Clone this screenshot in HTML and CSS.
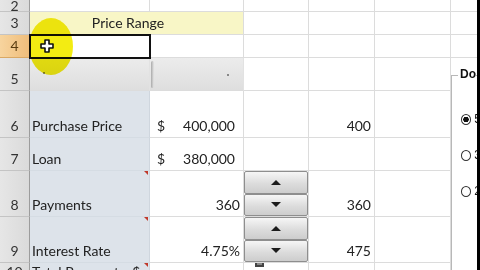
FILE: index.html
```html
<!DOCTYPE html>
<html lang="en">
<head>
  <meta charset="UTF-8" />
  <meta name="viewport" content="width=device-width, initial-scale=1.0"/>
  <title>Loan Calculator</title>
  <link rel="stylesheet" href="styles.css">
</head>
<body>

  <div class="sheet">
    <!-- row 2 -->
    <div class="hdr top-cut">2</div>
    <div class="cell"></div><div class="cell"></div><div class="cell"></div>
    <div class="cell"></div><div class="cell"></div><div class="cell"></div>

    <!-- row 3 -->
    <div class="hdr">3</div>
    <div class="cell title">Price Range</div>
    <div class="cell"></div><div class="cell"></div><div class="cell"></div><div class="cell"></div>

    <!-- row 4 -->
    <div class="hdr active">4</div>
    <div class="cell selected"></div>
    <div class="cell"></div><div class="cell"></div><div class="cell"></div>
    <div class="cell"></div><div class="cell"></div>

    <!-- row 5 -->
    <div class="hdr">5</div>
    <div class="cell shade"><span class="dot"></span></div>
    <div class="cell shade"><span class="pane-edge"></span><span class="dot right"></span></div>
    <div class="cell"></div><div class="cell"></div><div class="cell"></div><div class="cell"></div>

    <!-- row 6 -->
    <div class="hdr">6</div>
    <div class="cell label">Purchase Price</div>
    <div class="cell money"><span>$</span><span>400,000</span></div>
    <div class="cell"></div>
    <div class="cell num">400</div>
    <div class="cell"></div><div class="cell"></div>

    <!-- row 7 -->
    <div class="hdr">7</div>
    <div class="cell label">Loan</div>
    <div class="cell money"><span>$</span><span>380,000</span></div>
    <div class="cell"></div><div class="cell"></div><div class="cell"></div><div class="cell"></div>

    <!-- row 8 -->
    <div class="hdr">8</div>
    <div class="cell label note">Payments</div>
    <div class="cell num">360</div>
    <div class="cell control">
      <div class="spin"><button class="up"></button><button class="down"></button></div>
    </div>
    <div class="cell num">360</div>
    <div class="cell"></div><div class="cell"></div>

    <!-- row 9 -->
    <div class="hdr">9</div>
    <div class="cell label note">Interest Rate</div>
    <div class="cell num">4.75%</div>
    <div class="cell control">
      <div class="spin"><button class="up"></button><button class="down"></button></div>
    </div>
    <div class="cell num">475</div>
    <div class="cell"></div><div class="cell"></div>

    <!-- row 10 -->
    <div class="hdr bottom-cut">10</div>
    <div class="cell label note bottom-cut">Total Payments &nbsp;$</div>
    <div class="cell"></div>
    <div class="cell"><span class="check"></span></div>
    <div class="cell"></div><div class="cell"></div><div class="cell"></div>

    <!-- overlays -->
    <div class="highlight"></div>
    <svg class="cursor" width="14" height="14" viewBox="0 0 14 14">
      <path d="M5 1h4v4h4v4h-4v4h-4v-4h-4v-4h4z" fill="#fff" stroke="#111" stroke-width="1.6" stroke-linejoin="round"/>
    </svg>

    <div class="group-box">
      <span class="legend">Do</span>
      <div class="radios">
        <label><span class="radio checked"></span>5</label>
        <label><span class="radio"></span>3</label>
        <label><span class="radio"></span>2</label>
      </div>
    </div>

    <div class="edge"></div>
  </div>

</body>
</html>
```

FILE: styles.css
```css
* {
  box-sizing: border-box;
}

html, body {
  margin: 0;
  padding: 0;
  width: 480px;
  height: 270px;
  overflow: hidden;
  background: #fff;
}

body {
  font-family: 'Lato', 'Open Sans', sans-serif;
  font-size: 14px;
  color: #222;
}

.sheet {
  position: relative;
  display: grid;
  grid-template-columns: 30px 120px 94px 65px 66px 76px 29px;
  grid-template-rows: 12px 23px 23px 33px 47px 33px 46px 46px 8px;
  width: 480px;
  height: 270px;
  overflow: hidden;
}

.hdr {
  display: flex;
  align-items: flex-end;
  justify-content: center;
  padding-bottom: 3px;
  line-height: 16px;
  background: linear-gradient(to right, #e6e6e6, #dadada);
  border-right: 1px solid #9c9c9c;
  border-bottom: 1px solid #c4c4c4;
  color: #333;
  overflow: hidden;
}

.hdr.active {
  background: linear-gradient(to right, #f7d49e, #efbd7b);
  border-bottom-color: #d9a864;
  color: #5a3c10;
}

.cell {
  position: relative;
  display: flex;
  align-items: flex-end;
  padding: 0 3px 3px;
  line-height: 16px;
  border-right: 1px solid #dcdcdc;
  border-bottom: 1px solid #dcdcdc;
  white-space: nowrap;
  overflow: hidden;
}

.top-cut {
  align-items: flex-end;
  padding-bottom: 0;
  line-height: 10px;
}

.bottom-cut {
  align-items: flex-start;
  padding-top: 1px;
  padding-bottom: 0;
}

.title {
  grid-column: span 2;
  justify-content: center;
  background: #f8f6c6;
  padding-right: 20px;
}

.selected {
  outline: 2px solid #111;
  outline-offset: -1px;
  z-index: 1;
}

.shade {
  background: linear-gradient(#ececec, #dedede);
  border-right-color: #e2e2e2;
}

.shade .dot {
  position: absolute;
  left: 13px;
  top: 14px;
  width: 2px;
  height: 2px;
  background: #888;
}

.shade .dot.right {
  left: auto;
  right: 14px;
  top: 16px;
}

.pane-edge {
  position: absolute;
  left: 1px;
  top: 3px;
  bottom: 2px;
  width: 3px;
  background: linear-gradient(to right, #a9a9a9, #e6e6e6);
  border-radius: 2px;
}

.label {
  background: #dde3ea;
  padding-left: 2px;
  border-right-color: #cfd6de;
  border-bottom-color: #d5dce3;
}

.label.note::after {
  content: "";
  position: absolute;
  top: 0;
  right: 1px;
  border-top: 4px solid #c0392b;
  border-left: 4px solid transparent;
}

.money {
  justify-content: space-between;
  padding-left: 7px;
  padding-right: 8px;
}

.num {
  justify-content: flex-end;
  padding-right: 3px;
}

.control {
  padding: 0;
  align-items: stretch;
}

.spin {
  display: flex;
  flex-direction: column;
  width: 100%;
}

.spin button {
  flex: 1;
  display: flex;
  align-items: center;
  justify-content: center;
  padding: 0;
  background: linear-gradient(#f6f6f6, #dcdcdc 55%, #cdcdcd);
  border: 1px solid #8e8e8e;
  border-radius: 2px;
  cursor: pointer;
}

.spin button::before {
  content: "";
  border-left: 5px solid transparent;
  border-right: 5px solid transparent;
}

.spin .up::before {
  border-bottom: 5px solid #1c1c1c;
}

.spin .down::before {
  border-top: 5px solid #1c1c1c;
}

.check {
  display: block;
  width: 9px;
  height: 9px;
  margin: 1px 0 0 8px;
  border: 2px solid #444;
  background: #888;
}

.highlight {
  position: absolute;
  left: 29px;
  top: 18px;
  width: 44px;
  height: 57px;
  border-radius: 50%;
  background: #f3ec12;
  mix-blend-mode: multiply;
  z-index: 2;
}

.cursor {
  position: absolute;
  left: 40px;
  top: 39px;
  z-index: 3;
}

.group-box {
  position: absolute;
  left: 451px;
  top: 75px;
  width: 30px;
  height: 200px;
  background: #fff;
  border-left: 1px solid #b8b8b8;
  border-top: 1px solid #b8b8b8;
  z-index: 1;
}

.legend {
  position: absolute;
  left: 6px;
  top: -9px;
  padding-left: 2px;
  background: #fff;
  font-family: 'Liberation Sans', sans-serif;
  font-size: 12px;
  font-weight: bold;
  color: #111;
}

.radios {
  display: flex;
  flex-direction: column;
  gap: 20px;
  padding: 35px 0 0 9px;
}

.radios label {
  display: flex;
  align-items: center;
  gap: 3px;
  height: 16px;
  font-family: 'Liberation Sans', sans-serif;
  font-size: 12px;
  color: #111;
}

.radio {
  display: block;
  width: 11px;
  height: 11px;
  border: 1px solid #333;
  border-radius: 50%;
  background: #fff;
}

.radio.checked {
  background: radial-gradient(circle, #111 0 2.5px, #fff 3px);
}

.edge {
  position: absolute;
  right: 0;
  top: 0;
  width: 3px;
  height: 270px;
  background: #000;
  z-index: 4;
}
```
